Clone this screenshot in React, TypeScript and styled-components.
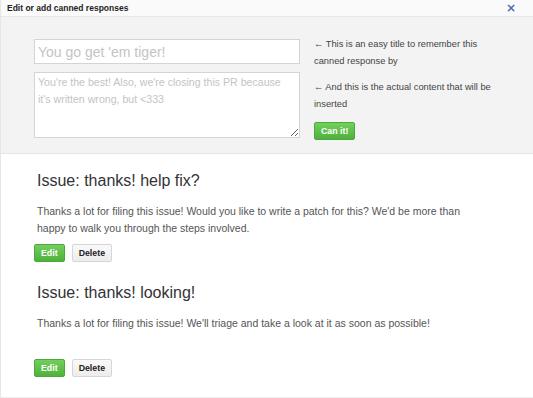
import styled, { createGlobalStyle } from "styled-components";

const GlobalStyle = createGlobalStyle`
  html, body {
    margin: 0;
    padding: 0;
    background: #ffffff;
    font-family: "Liberation Sans", Arial, sans-serif;
  }
`;

const Modal = styled.div`
  width: 533px;
  height: 398px;
  box-sizing: border-box;
  border-left: 1px solid #e6e6e6;
  border-bottom: 1px solid #ececec;
  background: #fff;
  display: flex;
  flex-direction: column;
  overflow: hidden;
`;

const Header = styled.div`
  height: 17px;
  box-sizing: border-box;
  display: flex;
  align-items: center;
  justify-content: space-between;
  padding: 0 17px 1px 6px;
  border-bottom: 1px solid #e8e8e8;
  background: #fafafa;
`;

const HeaderTitle = styled.h3`
  margin: 0;
  font-size: 8.5px;
  font-weight: bold;
  color: #222;
`;

const Close = styled.button`
  border: none;
  background: none;
  padding: 0;
  color: #4c6cb0;
  font-size: 12px;
  font-weight: bold;
  line-height: 1;
  font-family: "DejaVu Sans", sans-serif;
  cursor: pointer;
`;

const FormArea = styled.div`
  background: #f3f3f3;
  border-bottom: 1px solid #e4e4e4;
  display: flex;
  align-items: flex-start;
  gap: 14px;
  padding: 22px 0 13px 33px;
`;

const Fields = styled.div`
  display: flex;
  flex-direction: column;
  gap: 8px;
  width: 266px;
`;

const TitleInput = styled.input`
  box-sizing: border-box;
  width: 100%;
  height: 25px;
  border: 1px solid #d4d4d4;
  background: #fff;
  padding: 0 3px;
  font-family: "Liberation Sans", Arial, sans-serif;
  font-size: 14px;
  outline: none;
  &::placeholder {
    color: #c4c4c4;
  }
`;

const ContentArea = styled.textarea`
  box-sizing: border-box;
  display: block;
  width: 100%;
  height: 66px;
  border: 1px solid #d4d4d4;
  background: #fff;
  padding: 1px 3px;
  font-family: "Liberation Sans", Arial, sans-serif;
  font-size: 10.6px;
  line-height: 17px;
  resize: both;
  outline: none;
  &::placeholder {
    color: #c4c4c4;
  }
`;

const Hints = styled.div`
  width: 190px;
  display: flex;
  flex-direction: column;
  gap: 9px;
  margin-top: -3px;
`;

const Hint = styled.p`
  margin: 0;
  font-size: 9.3px;
  line-height: 17px;
  color: #444;
`;

const Button = styled.button<{ $primary?: boolean }>`
  align-self: flex-start;
  height: 18px;
  padding: 0 6px;
  border-radius: 2px;
  font-family: "Liberation Sans", Arial, sans-serif;
  font-size: 8.8px;
  font-weight: bold;
  line-height: 16px;
  cursor: pointer;
  color: ${(props) => (props.$primary ? "#fff" : "#222")};
  border: 1px solid ${(props) => (props.$primary ? "#4aa93a" : "#d6d6d6")};
  background: ${(props) =>
    props.$primary
      ? "linear-gradient(#72cf5b, #4fb13c)"
      : "linear-gradient(#fafafa, #ececec)"};
`;

const List = styled.div`
  padding: 13px 0 0 33px;
  display: flex;
  flex-direction: column;
  gap: 17px;
`;

const Item = styled.div`
  display: flex;
  flex-direction: column;
`;

const ItemTitle = styled.h2`
  margin: 0 0 8px 3px;
  font-size: 16px;
  font-weight: normal;
  line-height: 28px;
  color: #333;
`;

const ItemBody = styled.p<{ $gap: number }>`
  margin: 0 0 ${(props) => props.$gap}px 3px;
  font-size: 10.5px;
  line-height: 17px;
  color: #555;
  width: 450px;
`;

const Actions = styled.div`
  display: flex;
  gap: 7px;
`;

const responses = [
  {
    title: "Issue: thanks! help fix?",
    body: "Thanks a lot for filing this issue! Would you like to write a patch for this? We'd be more than happy to walk you through the steps involved.",
    gap: 7,
  },
  {
    title: "Issue: thanks! looking!",
    body: "Thanks a lot for filing this issue! We'll triage and take a look at it as soon as possible!",
    gap: 27,
  },
];

function App() {
  return (
    <>
      <GlobalStyle />
      <Modal>
        <Header>
          <HeaderTitle>Edit or add canned responses</HeaderTitle>
          <Close>×</Close>
        </Header>
        <FormArea>
          <Fields>
            <TitleInput placeholder="You go get 'em tiger!" />
            <ContentArea placeholder="You're the best! Also, we're closing this PR because it's written wrong, but <333" />
          </Fields>
          <Hints>
            <Hint>← This is an easy title to remember this canned response by</Hint>
            <Hint>← And this is the actual content that will be inserted</Hint>
            <Button $primary>Can it!</Button>
          </Hints>
        </FormArea>
        <List>
          {responses.map((r) => (
            <Item key={r.title}>
              <ItemTitle>{r.title}</ItemTitle>
              <ItemBody $gap={r.gap}>{r.body}</ItemBody>
              <Actions>
                <Button $primary>Edit</Button>
                <Button>Delete</Button>
              </Actions>
            </Item>
          ))}
        </List>
      </Modal>
    </>
  );
}

export default App;
